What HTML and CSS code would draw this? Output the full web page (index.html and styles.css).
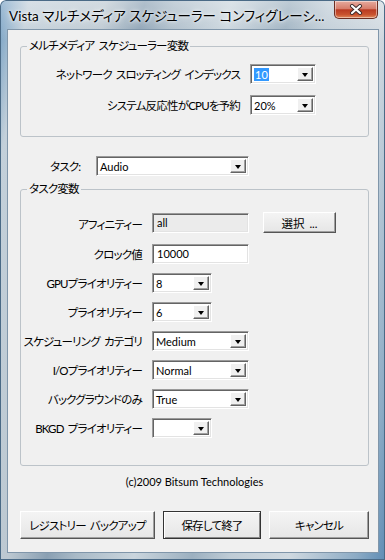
FILE: index.html
```html
<!DOCTYPE html>
<html lang="ja">
<head>
    <meta charset="UTF-8">
    <title>Vista マルチメディア スケジューラー コンフィグレーション</title>
    <link rel="stylesheet" href="styles.css">
</head>
<body>

    <div class="window">
        <!-- Title bar -->
        <div class="titlebar">
            <span class="title">Vista マルチメディア スケジューラー コンフィグレーシ...</span>
            <div class="close-btn">
                <svg width="14" height="11" viewBox="0 0 14 11">
                    <path d="M3 2 L11 9 M11 2 L3 9" stroke="#3b2a2a" stroke-width="4" stroke-linecap="round"/>
                    <path d="M3 2 L11 9 M11 2 L3 9" stroke="#fff" stroke-width="2.2" stroke-linecap="round"/>
                </svg>
            </div>
        </div>

        <div class="client">
            <!-- Multimedia scheduler variables -->
            <fieldset class="group group-mm">
                <legend>メルチメディア スケジューラー変数</legend>
                <div class="form-grid mm-grid">
                    <label>ネットワーク スロッティング インデックス</label>
                    <div class="combo w-mm"><span class="value"><span class="selected">10</span></span><span class="drop"></span></div>

                    <label>システム反応性がCPUを予約</label>
                    <div class="combo w-mm"><span class="value">20%</span><span class="drop"></span></div>
                </div>
            </fieldset>

            <div class="task-row">
                <label>タスク:</label>
                <div class="combo w-task"><span class="value">Audio</span><span class="drop"></span></div>
            </div>

            <!-- Task variables -->
            <fieldset class="group group-task">
                <legend>タスク変数</legend>
                <div class="form-grid task-grid">
                    <label>アフィニティー</label>
                    <div class="field-with-btn">
                        <div class="textbox readonly">all</div>
                        <button class="btn btn-small">選択 ...</button>
                    </div>

                    <label>クロック値</label>
                    <div class="textbox">10000</div>

                    <label>GPUプライオリティー</label>
                    <div class="combo w-short"><span class="value">8</span><span class="drop"></span></div>

                    <label>プライオリティー</label>
                    <div class="combo w-short"><span class="value">6</span><span class="drop"></span></div>

                    <label>スケジューリング カテゴリ</label>
                    <div class="combo w-long"><span class="value">Medium</span><span class="drop"></span></div>

                    <label>I/Oプライオリティー</label>
                    <div class="combo w-long"><span class="value">Normal</span><span class="drop"></span></div>

                    <label>バックグラウンドのみ</label>
                    <div class="combo w-long"><span class="value">True</span><span class="drop"></span></div>

                    <label>BKGD プライオリティー</label>
                    <div class="combo w-short"><span class="value"></span><span class="drop"></span></div>
                </div>
            </fieldset>

            <p class="copyright">(c)2009 Bitsum Technologies</p>

            <div class="buttons">
                <button class="btn btn-backup">レジストリー バックアップ</button>
                <button class="btn btn-save default">保存して終了</button>
                <button class="btn btn-cancel">キャンセル</button>
            </div>
        </div>
    </div>

</body>
</html>
```

FILE: styles.css
```css
body {
    margin: 0;
    padding: 0;
    font-family: "Lato", "Noto Sans CJK JP", sans-serif;
    font-size: 11.5px;
    letter-spacing: -0.8px;
    word-spacing: 2px;
    font-feature-settings: "palt";
    color: #000;
}

/* window frame (aero glass) */
.window {
    width: 385px;
    height: 560px;
    box-sizing: border-box;
    padding: 0 7px 8px 8px;
    display: flex;
    flex-direction: column;
    border-radius: 6px 6px 0 0;
    background:
        linear-gradient(180deg, rgba(255,255,255,0.35), rgba(255,255,255,0) 40px),
        linear-gradient(100deg, #6f9cc2 0%, #c3d0da 6%, #bcc8d1 22%, #8aa0b3 30%, #a9bac7 36%, #cad5dd 48%, #9cb0c0 60%, #bfccd6 68%, #d0d9e0 80%, #8cabc5 94%, #5f8db5 100%);
    box-shadow: inset 0 0 0 1px #4a6a86;
}

.titlebar {
    height: 30px;
    display: flex;
    align-items: flex-start;
    justify-content: space-between;
}

.title {
    padding: 5px 0 0 1px;
    font-size: 13.5px;
    letter-spacing: 0;
    word-spacing: 0;
    white-space: nowrap;
    text-shadow: 0 0 6px rgba(255,255,255,0.9), 0 0 3px rgba(255,255,255,0.9);
}

.close-btn {
    width: 44px;
    height: 18px;
    margin-top: 1px;
    box-sizing: border-box;
    display: flex;
    align-items: center;
    justify-content: center;
    border: 1px solid #6b2d22;
    border-top: none;
    border-radius: 0 0 5px 5px;
    background: linear-gradient(180deg, #e6ab9f 0%, #d77d6b 45%, #b93a22 52%, #c9532f 80%, #e08a5c 100%);
    box-shadow: inset 0 0 0 1px rgba(255,255,255,0.45);
}

/* client area */
.client {
    flex: 1;
    background: #f0f0f0;
    padding: 0 9px 0 12px;
    box-shadow: 0 0 0 1px #8096aa;
}

.group {
    margin: 0;
    padding: 0;
    border: 1px solid #bcc3c9;
    border-radius: 3px;
}

.group legend {
    margin-left: 6px;
    padding: 0 2px;
    line-height: 16px;
}

.group-mm {
    margin-top: 8px;
    padding-top: 10px;
    padding-bottom: 21px;
}

.form-grid {
    display: grid;
    column-gap: 10px;
    align-items: center;
}

.form-grid label {
    text-align: right;
    white-space: nowrap;
}

.mm-grid {
    grid-template-columns: 219px auto;
    row-gap: 11px;
}

.task-row {
    margin-top: 19px;
    display: flex;
    align-items: center;
    padding-left: 30px;
}

.task-row label {
    width: 46px;
}

.group-task {
    margin-top: 5px;
    padding-top: 15px;
    padding-bottom: 27px;
}

.task-grid {
    grid-template-columns: 121px auto;
    row-gap: 9px;
}

.field-with-btn {
    display: flex;
    align-items: center;
    gap: 14px;
    margin-bottom: 2px;
}

/* controls */
.combo,
.textbox {
    height: 20px;
    box-sizing: border-box;
    background: #fff;
    border: 1px solid;
    border-color: #9a9a9a #ffffff #ffffff #9a9a9a;
    box-shadow: inset 1px 1px #646464, inset -1px -1px #e3e3e3;
    font-size: 11px;
    letter-spacing: 0;
    word-spacing: 0;
}

.combo {
    display: flex;
    align-items: stretch;
    padding: 2px;
}

.combo .value {
    flex: 1;
    padding-left: 1px;
    line-height: 16px;
    white-space: nowrap;
}

.combo .selected {
    background: #3399ff;
    color: #fff;
    padding: 0 1px;
}

.combo .drop {
    width: 16px;
    box-sizing: border-box;
    background: #f0f0f0;
    border: 1px solid;
    border-color: #ffffff #646464 #646464 #ffffff;
    box-shadow: inset -1px -1px #a0a0a0;
    display: flex;
    align-items: center;
    justify-content: center;
}

.combo .drop::after {
    content: "";
    border-left: 3.5px solid transparent;
    border-right: 3.5px solid transparent;
    border-top: 4px solid #000;
    margin-top: 1px;
}

.w-mm { width: 66px; }
.w-task { width: 153px; }
.w-long { width: 97px; }
.w-short { width: 60px; }

.textbox {
    width: 97px;
    padding: 0 4px;
    line-height: 18px;
}

.textbox.readonly {
    background: #ebebeb;
}

.btn {
    font-family: inherit;
    font-size: 11.5px;
    letter-spacing: -0.8px;
    word-spacing: 2px;
    font-feature-settings: "palt";
    color: #000;
    background: linear-gradient(180deg, #f4f4f4, #e6e6e6);
    border: 1px solid;
    border-color: #ffffff #555555 #555555 #ffffff;
    box-shadow: inset -1px -1px #a0a0a0;
    padding: 0;
}

.btn-small {
    width: 73px;
    height: 21px;
    letter-spacing: 0;
}

.copyright {
    margin: 8px 0 0;
    text-align: center;
    line-height: 16px;
    font-size: 11px;
    letter-spacing: 0;
    word-spacing: 0;
}

.buttons {
    margin-top: 21px;
    display: flex;
    gap: 8px;
}

.buttons .btn {
    height: 28px;
}

.btn-backup { width: 135px; }
.btn-save { width: 98px; }
.btn-cancel { width: 100px; }

.btn.default {
    outline: 1px solid #333;
    outline-offset: -1px;
    border-color: #444 #333 #333 #444;
    box-shadow: inset 1px 1px #fff, inset -1px -1px #888;
}
```
